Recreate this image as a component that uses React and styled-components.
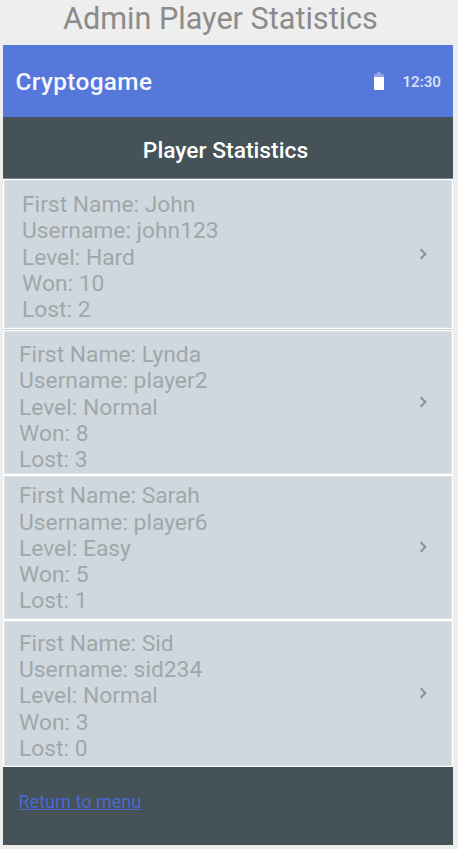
import React from "react";
import styled, { createGlobalStyle } from "styled-components";

const GlobalStyle = createGlobalStyle`
  *, *::before, *::after { box-sizing: border-box; }
  body { margin: 0; background: #eeeeee; font-family: Roboto, sans-serif; }
`;

const Page = styled.main`
  width: 458px;
  height: 849px;
  overflow: hidden;
  background: #eeeeee;
`;

const Caption = styled.h1`
  margin: 0;
  height: 45px;
  padding: 0 0 0 63px;
  font-size: 30.6px;
  font-weight: 400;
  line-height: 37px;
  color: #8b8b8b;
  white-space: nowrap;
`;

const Phone = styled.section`
  width: 450px;
  height: 800px;
  margin-left: 3px;
  display: flex;
  flex-direction: column;
  background: #455257;
`;

const AppBar = styled.header`
  height: 72px;
  flex: none;
  display: flex;
  align-items: center;
  padding: 0 12px 0 12.5px;
  background: #5678db;
`;

const AppName = styled.div`
  flex: 1;
  padding-top: 1px;
  font-size: 24.4px;
  font-weight: 500;
  letter-spacing: 0.35px;
  color: #f5f7fd;
`;

const Battery = styled.svg`
  width: 10px;
  height: 18px;
  margin-right: 18.5px;
`;

const Clock = styled.time`
  font-size: 15.2px;
  font-weight: 500;
  color: #dde4f8;
  padding-top: 2px;
`;

const ScreenTitle = styled.h2`
  margin: 0;
  height: 62px;
  flex: none;
  padding: 0 5px 0 0;
  border-bottom: 1px solid #77898e;
  font-size: 22.8px;
  font-weight: 500;
  line-height: 67px;
  text-align: center;
  color: #ffffff;
`;

const PlayerCard = styled.article`
  height: ${(p) => p.$height}px;
  flex: none;
  display: flex;
  justify-content: space-between;
  padding: ${(p) => p.$top}px 24px 0 ${(p) => p.$left}px;
  border: 1px solid #ffffff;
  box-shadow: inset 0 0 0 1px #dae2e5;
  background: #cfd8de;
`;

const Divider = styled.hr`
  flex: none;
  width: 100%;
  height: 1px;
  margin: 0;
  border: 0;
  background: #c4cfd4;
`;

const Details = styled.div`
  font-size: 22.8px;
  line-height: 26.25px;
  color: #a0a7a9;
  white-space: nowrap;
`;

const Chevron = styled.svg`
  width: 9px;
  height: 12px;
  margin-top: ${(p) => p.$offset}px;
`;

const Footer = styled.footer`
  flex: 1;
  padding: 25px 0 0 15.5px;
`;

const ReturnLink = styled.a`
  font-size: 18px;
  line-height: 20px;
  color: #4c68d2;
  text-decoration: underline;
`;

const players = [
  { name: "John", user: "john123", level: "Hard", won: 10, lost: 2, height: 150, top: 12, left: 18, divider: true, arrow: 68 },
  { name: "Lynda", user: "player2", level: "Normal", won: 8, lost: 3, height: 145, top: 11, left: 15, arrow: 65 },
  { name: "Sarah", user: "player6", level: "Easy", won: 5, lost: 1, height: 145, top: 7.4, left: 15, arrow: 65 },
  { name: "Sid", user: "sid234", level: "Normal", won: 3, lost: 0, height: 147, top: 9.9, left: 15, arrow: 66 },
];

function BatteryIcon() {
  return (
    <Battery viewBox="0 0 10 18" aria-hidden="true">
      <path d="M3 0h4v2H10v3H0V2h3z" fill="#8fa5e7" />
      <path d="M0 5h10v12.2a.8.8 0 0 1-.8.8H.8a.8.8 0 0 1-.8-.8z" fill="#ffffff" />
    </Battery>
  );
}

function Player({ data }) {
  return (
    <>
      <PlayerCard $height={data.height} $top={data.top} $left={data.left}>
        <Details>
          <div>First Name: {data.name}</div>
          <div>Username: {data.user}</div>
          <div>Level: {data.level}</div>
          <div>Won: {data.won}</div>
          <div>Lost: {data.lost}</div>
        </Details>
        <Chevron $offset={data.arrow - data.top} viewBox="0 0 9 12" aria-hidden="true">
          <path d="M1.7 1.3 6.3 6 1.7 10.7" fill="none" stroke="#8d9396" strokeWidth="2.2" />
        </Chevron>
      </PlayerCard>
      {data.divider && <Divider />}
    </>
  );
}

export default function App() {
  return (
    <Page>
      <GlobalStyle />
      <Caption>Admin Player Statistics</Caption>
      <Phone>
        <AppBar>
          <AppName>Cryptogame</AppName>
          <BatteryIcon />
          <Clock>12:30</Clock>
        </AppBar>
        <ScreenTitle>Player Statistics</ScreenTitle>
        {players.map((p) => (
          <Player key={p.user} data={p} />
        ))}
        <Footer>
          <ReturnLink href="#">Return to menu</ReturnLink>
        </Footer>
      </Phone>
    </Page>
  );
}
